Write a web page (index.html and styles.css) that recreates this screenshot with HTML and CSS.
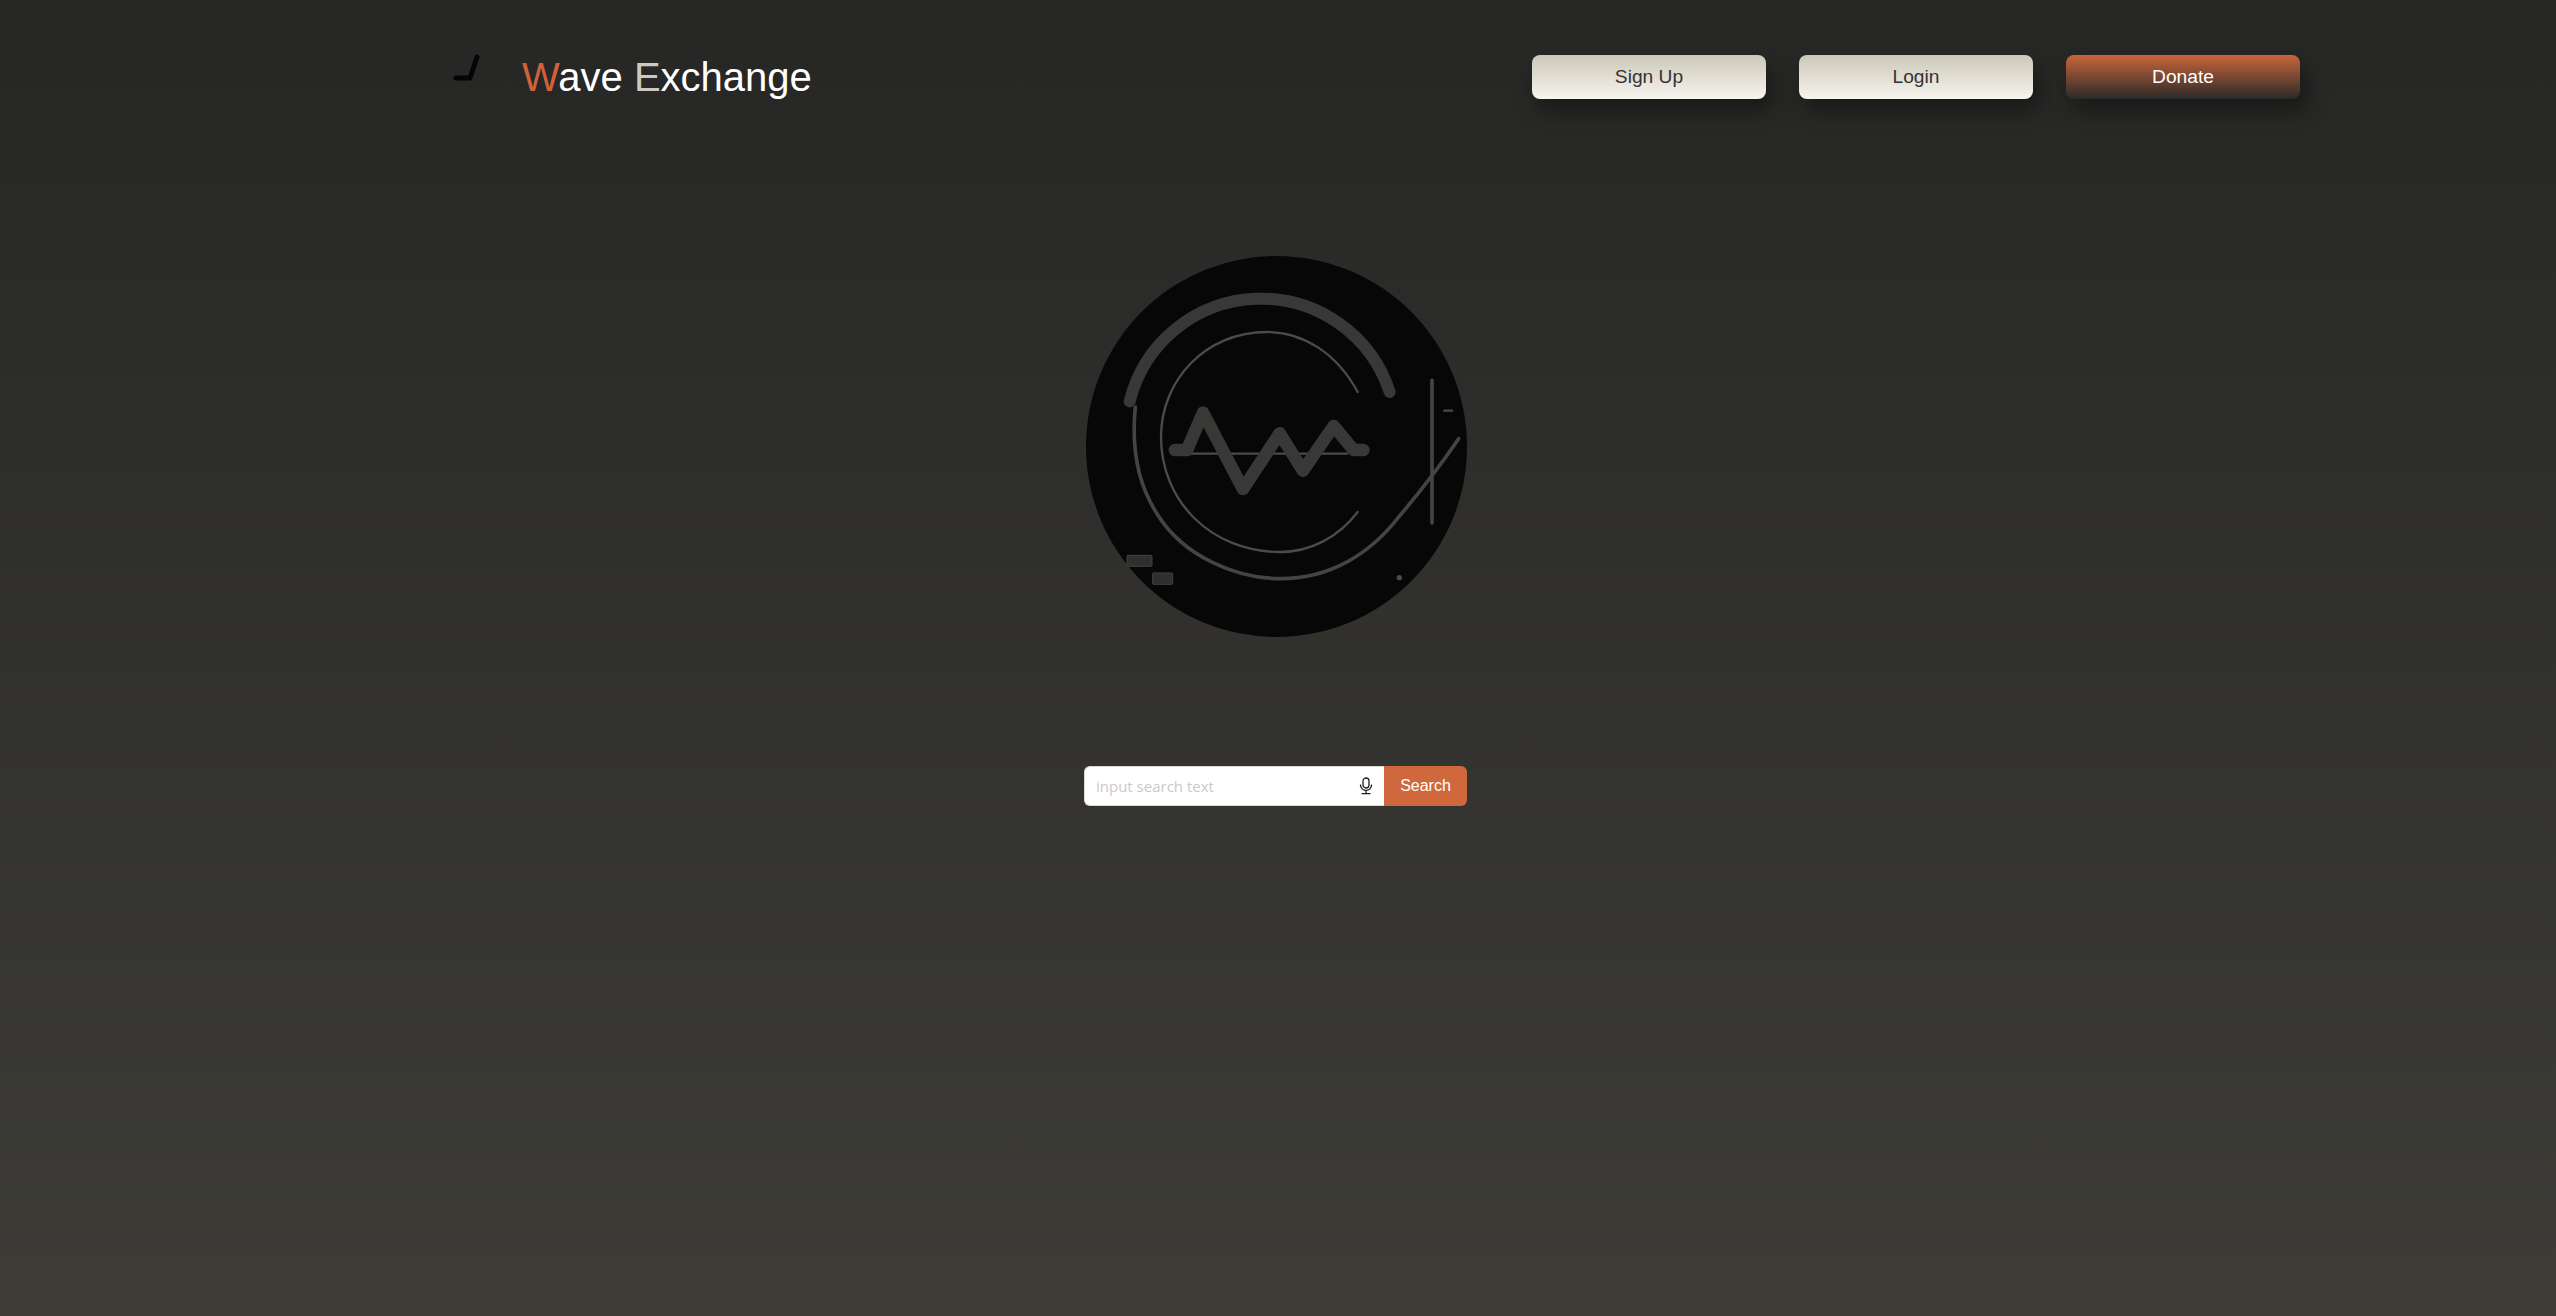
FILE: index.html
```html
<!DOCTYPE html>
<html lang="en">
<head>
  <meta charset="UTF-8" />
  <meta name="viewport" content="width=device-width, initial-scale=1.0" />
  <title>Wave Exchange</title>
  <link rel="stylesheet" href="styles.css">
</head>
<body>
  <header class="top-bar">
    <div class="brand">
      <svg class="brand-mark" viewBox="0 0 30 30" aria-hidden="true">
        <path d="M25 6 L18 27 L4 27" />
      </svg>
      <h1 class="brand-name"><span class="accent-w">W</span>ave <span class="accent-e">E</span>xchange</h1>
    </div>
    <nav class="actions">
      <button class="btn btn-light">Sign Up</button>
      <button class="btn btn-light">Login</button>
      <button class="btn btn-donate">Donate</button>
    </nav>
  </header>

  <main class="center">
    <svg class="emblem" viewBox="47 47 1143 1143" aria-hidden="true">
      <circle class="disc" cx="618.5" cy="618.5" r="571.5" />
      <path class="thick" d="M178 483 A406 406 0 0 1 958 455" />
      <path class="thin" d="M862 455 C800 340 700 275 590 275 C405 275 272 420 272 590 C272 780 420 935 630 935 C720 935 805 890 862 815" />
      <path class="mid" d="M195 500 C185 600 195 720 260 820 C340 950 500 1015 630 1015 C780 1015 900 940 985 830 C1040 765 1100 690 1165 595" />
      <path class="mid" d="M1085 420 L1085 848" />
      <path class="thin" d="M1122 511 L1145 511" />
      <path class="thin" d="M350 640 L830 640" />
      <path class="wave" d="M314 629 L350 629 L398 517 L518 746 L628 579 L698 691 L790 557 L850 629 L879 629" />
      <circle class="dot" cx="987" cy="1012" r="8" />
      <rect class="block" x="170" y="945" width="75" height="33" rx="3" />
      <rect class="block" x="247" y="998" width="60" height="34" rx="3" />
    </svg>

    <form class="search">
      <div class="search-field">
        <input class="search-input" type="text" placeholder="input search text" />
        <svg class="mic" viewBox="0 0 14 18" aria-hidden="true">
          <rect x="4" y="1" width="6" height="10" rx="3" />
          <path d="M1.5 7.5 V8 A5.5 5.5 0 0 0 12.5 8 V7.5 M7 13.5 V16.5 M2.5 16.7 H11.5" />
        </svg>
      </div>
      <button class="search-btn" type="button">Search</button>
    </form>
  </main>
</body>
</html>
```

FILE: styles.css
```css
* {
  box-sizing: border-box;
}
html, body {
  height: 100%;
}
body {
  margin: 0;
  overflow: hidden;
  font-family: "Liberation Sans", Arial, sans-serif;
  background: linear-gradient(180deg, #262625 0%, #3d3c37 100%);
}
.top-bar {
  display: flex;
  justify-content: space-between;
  align-items: center;
  padding: 51px 256px 0 452px;
}
.brand {
  display: flex;
  align-items: center;
  gap: 40px;
}
.brand-mark {
  width: 30px;
  height: 30px;
  margin-bottom: 22px;
  fill: none;
  stroke: #050505;
  stroke-width: 5;
  stroke-linecap: round;
  stroke-linejoin: round;
}
.brand-name {
  margin: 0;
  font-size: 40px;
  font-weight: 400;
  line-height: 44px;
  color: #fff;
}
.accent-w {
  color: #d0623a;
}
.accent-e {
  color: #cdc9be;
}
.actions {
  display: flex;
  gap: 33px;
}
.btn {
  width: 234px;
  height: 44px;
  border: none;
  border-radius: 8px;
  font-family: inherit;
  font-size: 19.2px;
  cursor: pointer;
  box-shadow: 6px 12px 22px rgba(0,0,0,0.4);
}
.btn-light {
  color: #333;
  background: linear-gradient(180deg, #cbc7ba 0%, #f8f5ee 100%);
}
.btn-donate {
  color: #fff;
  background: linear-gradient(180deg, #c9653a 0%, #2b2a28 100%);
}
.center {
  display: flex;
  flex-direction: column;
  align-items: center;
  padding-top: 153px;
}
.emblem {
  display: block;
  width: 381px;
  height: 381px;
  margin-left: -4px;
  fill: none;
  stroke-linecap: round;
  stroke-linejoin: round;
}
.disc {
  fill: #070707;
}
.thick {
  stroke: #383836;
  stroke-width: 36;
}
.wave {
  stroke: #383836;
  stroke-width: 38;
}
.mid {
  stroke: #454442;
  stroke-width: 11;
}
.thin {
  stroke: #4c4b49;
  stroke-width: 7;
}
.dot {
  fill: #4c4b49;
}
.block {
  fill: #302f2e;
  stroke: #434240;
  stroke-width: 3;
}
.search {
  display: flex;
  width: 383px;
  height: 40px;
  margin-top: 129px;
  margin-left: -5px;
}
.search-field {
  display: flex;
  align-items: center;
  flex: 1;
  background: #fff;
  border: 1px solid #d9d9d9;
  border-right: none;
  border-radius: 6px 0 0 6px;
  padding: 0 11px;
}
.search-input {
  flex: 1;
  min-width: 0;
  padding: 0;
  border: none;
  outline: none;
  font-family: "Open Sans", sans-serif;
  font-size: 15px;
}
.search-input::placeholder {
  color: #c9c9c9;
}
.mic {
  width: 14px;
  height: 18px;
  fill: none;
  stroke: #222;
  stroke-width: 1.3;
}
.search-btn {
  width: 83px;
  border: none;
  border-radius: 0 6px 6px 0;
  background: #d0683d;
  color: #fff;
  font-family: inherit;
  font-size: 16px;
  cursor: pointer;
}
```
